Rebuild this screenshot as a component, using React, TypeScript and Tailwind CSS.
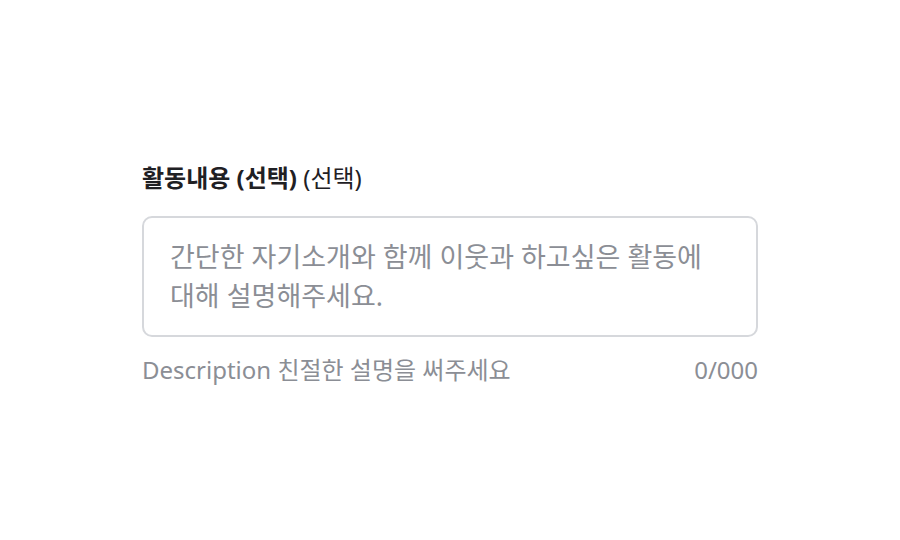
import React, { useState } from 'react';

const App = () => {
  const [text, setText] = useState('');

  return (
    <div
      className="min-h-screen w-full bg-white pt-[162px]"
      style={{ fontFamily: '"Noto Sans", "Noto Sans CJK KR", sans-serif' }}
    >
      <div className="mx-auto flex w-[616px] flex-col">
        <label className="mb-[22px] text-[24px] leading-[32px] text-[#1f2024]">
          <span className="font-bold">활동내용 (선택)</span> (선택)
        </label>
        <textarea
          className="h-[121px] w-full resize-none rounded-[10px] border-2 border-[#d6d8dc] px-[26px] py-[19px] text-[27px] leading-[39px] text-[#1f2024] placeholder:text-[#8b8e95] focus:outline-none"
          placeholder="간단한 자기소개와 함께 이웃과 하고싶은 활동에 대해 설명해주세요."
          value={text}
          onChange={(e) => setText(e.target.value)}
        />
        <div className="mt-[17px] flex items-center justify-between text-[24px] leading-[32px] text-[#8b8e95]">
          <span>Description 친절한 설명을 써주세요</span>
          <span>{text.length}/000</span>
        </div>
      </div>
    </div>
  );
};

export default App;
